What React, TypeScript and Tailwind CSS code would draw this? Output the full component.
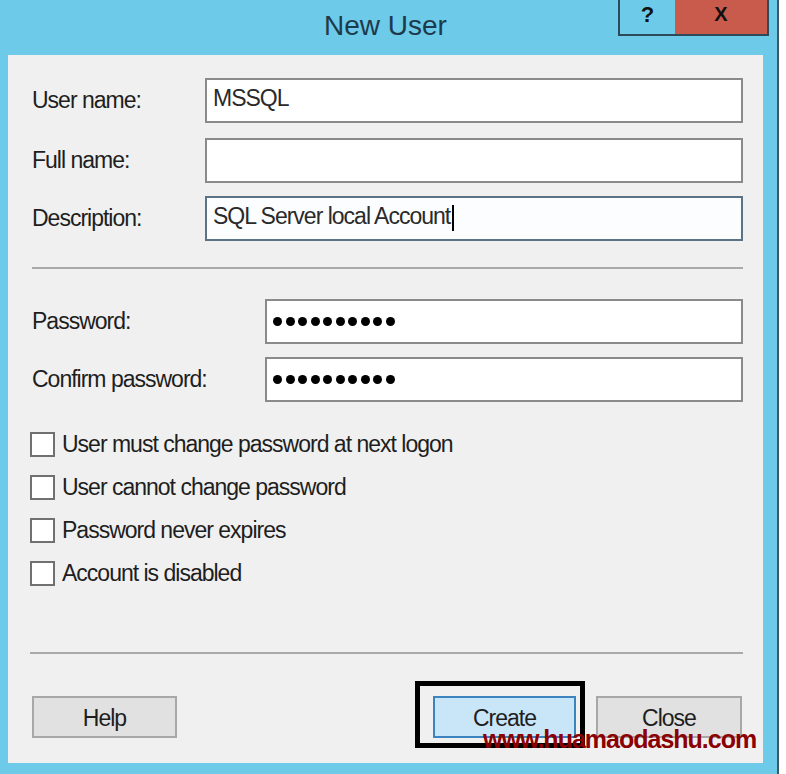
import React from 'react'

const font = { fontFamily: '"Liberation Sans", Arial, sans-serif' }

function Field({ label, labelWidth, value, focused, children }: { label: string; labelWidth: string; value?: string; focused?: boolean; children?: React.ReactNode }) {
  return (
    <div className="flex items-center h-[45px]">
      <div className={`${labelWidth} shrink-0 text-[23px] tracking-[-1px] text-[#1e1e1e]`}>{label}</div>
      <div
        className={
          focused
            ? 'flex-1 h-full flex items-center pl-[6px] pb-[4px] border-2 border-[#5c7386] bg-[#fbfdff] text-[23px] tracking-[-1px] text-[#2a2a2a]'
            : 'flex-1 h-full flex items-center pl-[6px] pb-[4px] border-2 border-[#8a8a8a] bg-white text-[23px] tracking-[-1px] text-[#2a2a2a]'
        }
      >
        {value}
        {children}
      </div>
    </div>
  )
}

function Dots() {
  return (
    <div className="flex items-center gap-[3.5px] pt-[4px]">
      {Array.from({ length: 10 }).map((_, i) => (
        <div key={i} className="w-[9px] h-[9px] rounded-full bg-black" />
      ))}
    </div>
  )
}

function Check({ label }: { label: string }) {
  return (
    <div className="flex items-center h-[25px] gap-[7px] -ml-[2px]">
      <div className="w-[25px] h-[25px] border-2 border-[#707070] bg-white shrink-0" />
      <span className="text-[23px] tracking-[-1px] text-[#1e1e1e] leading-none">{label}</span>
    </div>
  )
}

export default function App() {
  return (
    <div className="w-[786px] h-[774px] flex bg-white relative overflow-hidden" style={font}>
      {/* window frame */}
      <div className="w-[777px] h-full bg-[#6dcae8] flex flex-col pl-[8px] pr-[14px] pb-[11px] relative">
        {/* title bar */}
        <div className="h-[55px] flex items-center justify-center pb-[4px]">
          <span className="text-[28px] text-[#1d3a4b]">New User</span>
        </div>
        <div className="absolute top-0 left-[618px] flex h-[36px] border-l-2 border-b-2 border-r-2 border-[#2d4a5b]">
          <div className="w-[55px] flex items-center justify-center pb-[6px] text-[22px] font-bold text-[#111]">?</div>
          <div className="w-[92px] bg-[#c95b4c] flex items-center justify-center pb-[6px] text-[20px] font-bold text-[#111]">X</div>
        </div>

        {/* client area */}
        <div className="flex-1 bg-[#f0f0f0] flex flex-col pl-[24px] pr-[20px] pt-[23px]">
          <Field label="User name:" labelWidth="w-[173px]" value="MSSQL" />
          <div className="mt-[15px]">
            <Field label="Full name:" labelWidth="w-[173px]" />
          </div>
          <div className="mt-[13px]">
            <Field label="Description:" labelWidth="w-[173px]" value="SQL Server local Account" focused>
              <span className="inline-block w-[2px] h-[26px] bg-black ml-[2px] mt-[2px]" />
            </Field>
          </div>

          <div className="mt-[26px] border-t-2 border-[#a9a9a9]" />

          <div className="mt-[30px]">
            <Field label="Password:" labelWidth="w-[233px]">
              <Dots />
            </Field>
          </div>
          <div className="mt-[13px]">
            <Field label="Confirm password:" labelWidth="w-[233px]">
              <Dots />
            </Field>
          </div>

          <div className="mt-[30px] flex flex-col gap-[18px]">
            <Check label="User must change password at next logon" />
            <Check label="User cannot change password" />
            <Check label="Password never expires" />
            <Check label="Account is disabled" />
          </div>

          <div className="mt-[66px] -ml-[2px] border-t-2 border-[#a9a9a9]" />

          <div className="mt-[42px] flex items-center h-[42px]">
            <button className="w-[145px] h-full bg-[#e1e1e1] border-2 border-[#a8a8a8] text-[23px] tracking-[-1px] text-[#1e1e1e] pt-[2px]">
              Help
            </button>
            <div className="relative ml-[256px]">
              <div className="absolute -left-[18px] -top-[15px] -right-[9px] -bottom-[10px] border-[5px] border-black" />
              <button className="relative w-[143px] h-[42px] bg-[#c9e6f9] border-2 border-[#3b84bf] text-[23px] tracking-[-1px] text-[#1e1e1e] pt-[2px]">
                Create
              </button>
            </div>
            <button className="ml-[20px] w-[146px] h-full bg-[#e1e1e1] border-2 border-[#a8a8a8] text-[23px] tracking-[-1px] text-[#1e1e1e] pt-[2px]">
              Close
            </button>
          </div>
        </div>
      </div>
      <div className="w-[2px] h-full bg-[#3e5866]" />
      <div className="flex-1 h-full bg-white" />

      {/* watermark */}
      <div className="absolute left-[483px] top-[727px] text-[25px] leading-[25px] tracking-[-1px] font-bold text-[#8b0000]">
        www.huamaodashu.com
      </div>
    </div>
  )
}
